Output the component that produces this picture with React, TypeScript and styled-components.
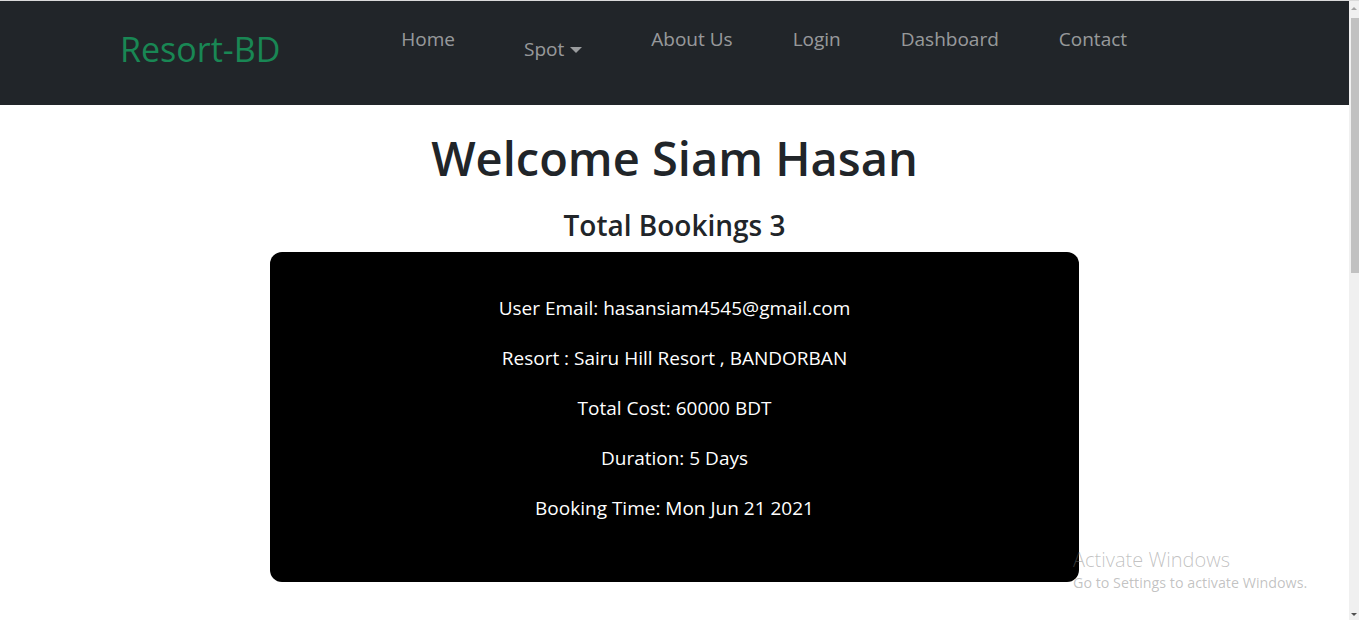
import React from "react";
import styled, { createGlobalStyle } from "styled-components";

const GlobalStyle = createGlobalStyle`
  html, body { margin: 0; padding: 0; background: #fff; }
  body { font-family: "Open Sans", "Noto Sans", sans-serif; color: #212529; }
  * { box-sizing: border-box; }
`;

const Page = styled.div`
  display: flex;
  height: 620px;
  overflow: hidden;
  border-top: 1px solid #dadada;
`;

const Main = styled.div`
  flex: 1;
  position: relative;
  display: flex;
  flex-direction: column;
`;

const NavBar = styled.nav`
  height: 104px;
  background: #212529;
  display: flex;
  align-items: flex-start;
  padding-left: 120px;
`;

const Brand = styled.a`
  font-size: 34px;
  line-height: 40px;
  margin-top: 28px;
  color: #198754;
  text-decoration: none;
`;

const NavList = styled.ul`
  list-style: none;
  margin: 0 0 0 91px;
  padding: 0;
  display: flex;
  align-items: flex-start;
`;

const NavItem = styled.li<{ $drop?: boolean }>`
  padding: ${(p) => (p.$drop ? "36px 39px 0" : "26px 30px 0")};
`;

const NavLink = styled.a`
  font-size: 19px;
  line-height: 24px;
  color: rgba(255, 255, 255, 0.55);
  text-decoration: none;
  display: inline-flex;
  align-items: center;
  gap: 6px;
`;

const Caret = styled.span`
  width: 0;
  height: 0;
  border-left: 6px solid transparent;
  border-right: 6px solid transparent;
  border-top: 6px solid rgba(255, 255, 255, 0.55);
  margin-top: 2px;
`;

const Content = styled.main`
  display: flex;
  flex-direction: column;
  align-items: center;
`;

const Title = styled.h1`
  font-size: 47px;
  line-height: 58px;
  font-weight: 600;
  margin: 24px 0 0;
`;

const SubTitle = styled.h3`
  font-size: 28px;
  line-height: 34px;
  font-weight: 600;
  margin: 21px 0 0;
`;

const Card = styled.section`
  width: 60%;
  margin-top: 10px;
  background: #000;
  border-radius: 12px;
  padding: 41px 20px 59px;
  display: flex;
  flex-direction: column;
  align-items: center;
  gap: 20px;
`;

const Line = styled.p`
  margin: 0;
  color: #fff;
  font-size: 19px;
  line-height: 30px;
`;

const Watermark = styled.div`
  position: absolute;
  left: 1073px;
  top: 546px;
  color: rgba(120, 120, 120, 0.45);
  font-family: "Open Sans", sans-serif;
  pointer-events: none;
`;

const WmTitle = styled.div`
  font-size: 20px;
  line-height: 26px;
  font-weight: 300;
`;

const WmSub = styled.div`
  font-size: 14.3px;
  line-height: 20px;
`;

const ScrollTrack = styled.div`
  width: 10px;
  background: #f0f0f0;
  display: flex;
  flex-direction: column;
  align-items: center;
  padding: 6px 0 4px;
`;

const ArrowUp = styled.span`
  width: 0;
  height: 0;
  border-left: 3px solid transparent;
  border-right: 3px solid transparent;
  border-bottom: 3px solid #a3a3a3;
`;

const ArrowDown = styled.span`
  width: 0;
  height: 0;
  border-left: 3px solid transparent;
  border-right: 3px solid transparent;
  border-top: 3px solid #505050;
  margin-top: auto;
`;

const Thumb = styled.div`
  width: 8px;
  height: 255px;
  margin-top: 8px;
  margin-left: 2px;
  background: #c1c1c1;
`;

const links = ["About Us", "Login", "Dashboard", "Contact"];
const lines = [
  "User Email: hasansiam4545@gmail.com",
  "Resort : Sairu Hill Resort , BANDORBAN",
  "Total Cost: 60000 BDT",
  "Duration: 5 Days",
  "Booking Time: Mon Jun 21 2021",
];

export default function App() {
  return (
    <>
      <GlobalStyle />
      <Page>
        <Main>
          <NavBar>
            <Brand href="#">Resort-BD</Brand>
            <NavList>
              <NavItem>
                <NavLink href="#">Home</NavLink>
              </NavItem>
              <NavItem $drop>
                <NavLink href="#">
                  Spot <Caret />
                </NavLink>
              </NavItem>
              {links.map((l) => (
                <NavItem key={l}>
                  <NavLink href="#">{l}</NavLink>
                </NavItem>
              ))}
            </NavList>
          </NavBar>
          <Content>
            <Title>Welcome Siam Hasan</Title>
            <SubTitle>Total Bookings 3</SubTitle>
            <Card>
              {lines.map((l) => (
                <Line key={l}>{l}</Line>
              ))}
            </Card>
          </Content>
          <Watermark>
            <WmTitle>Activate Windows</WmTitle>
            <WmSub>Go to Settings to activate Windows.</WmSub>
          </Watermark>
        </Main>
        <ScrollTrack>
          <ArrowUp />
          <Thumb />
          <ArrowDown />
        </ScrollTrack>
      </Page>
    </>
  );
}
